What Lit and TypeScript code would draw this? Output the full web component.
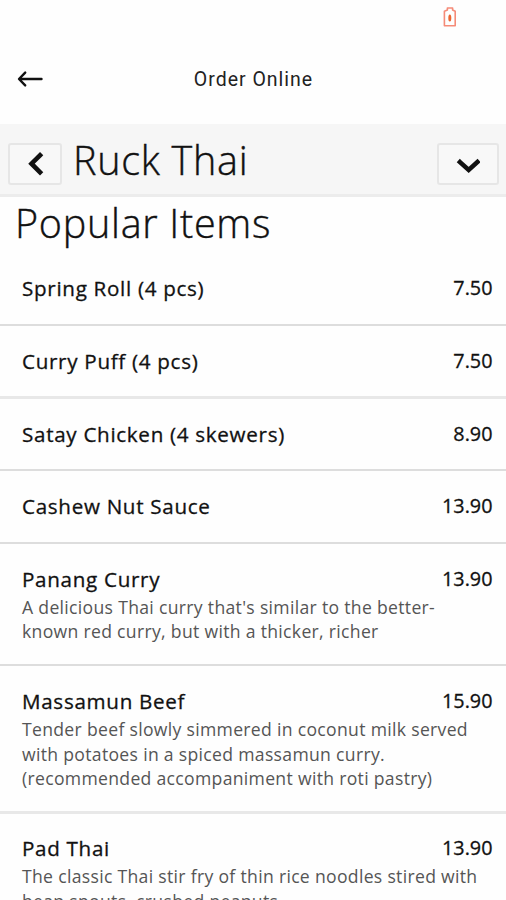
import { LitElement, html, css, svg, nothing } from "lit";
import { customElement, property } from "lit/decorators.js";

interface Item {
  name: string;
  price: string;
  lines?: string[];
}

const ITEMS: Item[] = [
  { name: "Spring Roll (4 pcs)", price: "7.50" },
  { name: "Curry Puff (4 pcs)", price: "7.50" },
  { name: "Satay Chicken (4 skewers)", price: "8.90" },
  { name: "Cashew Nut Sauce", price: "13.90" },
  {
    name: "Panang Curry",
    price: "13.90",
    lines: ["A delicious Thai curry that's similar to the better-", "known red curry, but with a thicker, richer"],
  },
  {
    name: "Massamun Beef",
    price: "15.90",
    lines: [
      "Tender beef slowly simmered in coconut milk served",
      "with potatoes in a spiced massamun curry.",
      "(recommended accompaniment with roti pastry)",
    ],
  },
  {
    name: "Pad Thai",
    price: "13.90",
    lines: ["The classic Thai stir fry of thin rice noodles stired with", "bean spouts, crushed peanuts"],
  },
];

@customElement("menu-item")
export class MenuItem extends LitElement {
  @property({ attribute: false }) item!: Item;

  static styles = css`
    :host {
      display: block;
      box-sizing: border-box;
      padding: 22.3px 13.5px 20.8px 22px;
      border-bottom: 2px solid #dddddd;
    }
    .head {
      display: flex;
      justify-content: space-between;
      height: 27.6px;
      color: #111;
      -webkit-text-stroke: 0.3px #111;
    }
    .name {
      font-size: 20.6px;
      line-height: 26px;
      letter-spacing: 0.7px;
    }
    .price {
      font-size: 19.8px;
      line-height: 26px;
    }
    .lines {
      padding-top: 0.9px;
      margin-bottom: -0.8px;
    }
    .line {
      height: 24.75px;
      line-height: 25px;
      font-size: 17.6px;
      letter-spacing: 0.31px;
      color: #555;
      white-space: nowrap;
    }
  `;

  render() {
    const { name, price, lines } = this.item;
    return html`
      <div class="head"><span class="name">${name}</span><span class="price">${price}</span></div>
      ${lines ? html`<div class="lines">${lines.map((l) => html`<div class="line">${l}</div>`)}</div>` : nothing}
    `;
  }
}

@customElement("app-root")
export class AppRoot extends LitElement {
  static styles = css`
    :host {
      display: block;
      height: 900px;
      overflow: hidden;
      background: #fefefe;
      color: #111;
      font-family: "Open Sans", "Noto Sans", sans-serif;
    }
    svg {
      display: block;
      fill: none;
    }
    .status {
      display: flex;
      justify-content: flex-end;
      height: 34px;
      box-sizing: border-box;
      padding: 6px 49px 0 0;
    }
    .nav {
      display: grid;
      grid-template-columns: 60px 1fr 60px;
      align-items: center;
      height: 90px;
    }
    .back {
      padding-left: 17px;
    }
    .nav-title {
      text-align: center;
      padding: 2px 0 0 1px;
      font: 400 19.5px/24px Roboto, sans-serif;
      letter-spacing: 1px;
      color: #222;
    }
    .bar {
      display: flex;
      align-items: flex-start;
      height: 73px;
      box-sizing: border-box;
      padding: 19px 7px 0 8px;
      background: #f6f6f6;
      border-bottom: 3px solid #ececec;
    }
    .btn {
      display: flex;
      align-items: center;
      justify-content: center;
      box-sizing: border-box;
      width: 54px;
      height: 42px;
      border: 2px solid #e6e6e6;
      border-radius: 3px;
      background: #f8f8f8;
    }
    .wide {
      width: 62px;
    }
    h1,
    h2 {
      margin: 0;
      font-weight: 300;
      font-size: 39.5px;
      line-height: 54px;
      letter-spacing: 0.72px;
      white-space: nowrap;
      -webkit-text-stroke: 0.4px #111;
    }
    h1 {
      flex: 1;
      margin: -10px 0 0 11px;
    }
    h2 {
      height: 56px;
      box-sizing: border-box;
      padding-left: 15px;
      line-height: 52px;
    }
    menu-item:nth-of-type(2),
    menu-item:nth-of-type(6) {
      border-bottom: 3px solid #e8e8e8;
      margin-bottom: -1px;
    }
  `;

  render() {
    return html`
      <div class="status">
        <svg width="14" height="22" viewBox="0 0 14 22">
          ${svg`<path d="M4.4 4V2h5.2v2l2.6 1.3v14.4H1.4V5.3Z" stroke="#f58b78" stroke-width="1.6" stroke-linejoin="round"/>
          <ellipse cx="6.8" cy="12" rx="1.5" ry="3.6" fill="#ec6430"/>`}
        </svg>
      </div>
      <div class="nav">
        <svg class="back" width="28" height="20" viewBox="0 0 28 20">
          <path d="M24.5 10H2.3M8.2 3.6L2 10l6.2 6.4" stroke="#111" stroke-width="2.4" stroke-linecap="round" stroke-linejoin="round" />
        </svg>
        <span class="nav-title">Order Online</span>
      </div>
      <div class="bar">
        <div class="btn">
          <svg width="20" height="24" viewBox="0 0 20 24">
            <path d="M15 3.3L6.5 11.7l8.5 8.5" stroke="#111" stroke-width="4.6" stroke-linecap="square" />
          </svg>
        </div>
        <h1>Ruck Thai</h1>
        <div class="btn wide">
          <svg width="24" height="20" viewBox="0 0 24 20">
            <path d="M4 8.1L12.7 15.9l8.7-7.8" stroke="#111" stroke-width="4.6" stroke-linecap="square" />
          </svg>
        </div>
      </div>
      <h2>Popular Items</h2>
      ${ITEMS.map((item) => html`<menu-item .item=${item}></menu-item>`)}
    `;
  }
}
